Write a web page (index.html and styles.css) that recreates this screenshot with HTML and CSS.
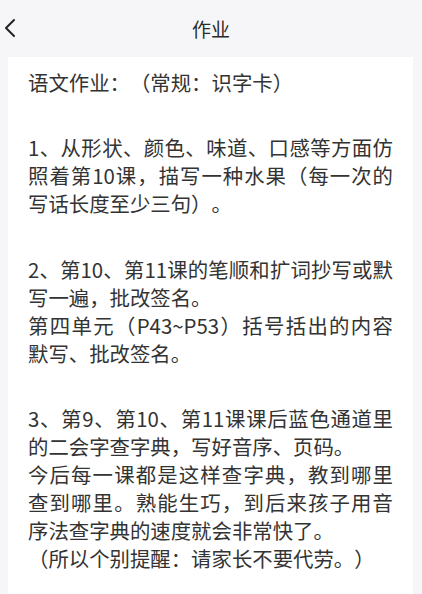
FILE: index.html
```html
<!DOCTYPE html>
<html lang="zh-CN">
<head>
<meta charset="utf-8">
<title>作业</title>
<link rel="stylesheet" href="styles.css">
</head>
<body>
<div class="page">
  <header class="nav">
    <span class="back" aria-label="返回">
      <svg width="14" height="20" viewBox="0 0 14 20"><path d="M11 2 L3 10 L11 18" fill="none" stroke="#222" stroke-width="2" stroke-linecap="round" stroke-linejoin="round"/></svg>
    </span>
    <h1 class="title">作业</h1>
  </header>
  <main class="card">
    <p class="para">语文作业：（常规：识字卡）</p>
    <p class="para">1、从形状、颜色、味道、口感等方面仿照着第10课，描写一种水果（每一次的写话长度至少三句）。</p>
    <p class="para">2、第10、第11课的笔顺和扩词抄写或默写一遍，批改签名。<br>第四单元（P43~P53）括号括出的内容默写、批改签名。</p>
    <p class="para">3、第9、第10、第11课课后蓝色通道里的二会字查字典，写好音序、页码。<br>今后每一课都是这样查字典，教到哪里查到哪里。熟能生巧，到后来孩子用音序法查字典的速度就会非常快了。<br>（所以个别提醒：请家长不要代劳。）</p>
  </main>
</div>
</body>
</html>
```

FILE: styles.css
```css
html, body {
  margin: 0;
  padding: 0;
  background: #f6f6f8;
}
body {
  font-family: "Noto Sans CJK SC", "Noto Sans", sans-serif;
  color: #333;
  text-spacing-trim: space-all;
}
.page {
  width: 422px;
  height: 594px;
  overflow: hidden;
  display: flex;
  flex-direction: column;
}
.nav {
  position: relative;
  height: 57px;
  display: flex;
  align-items: center;
  justify-content: center;
  flex-shrink: 0;
}
.back {
  position: absolute;
  left: 3px;
  top: 18px;
  display: flex;
}
.title {
  margin: 0;
  font-size: 19px;
  font-weight: 400;
  color: #2a2a2a;
  line-height: 1;
  padding-bottom: 1px;
}
.card {
  margin: 0 9px 0 8px;
  background: #fff;
  padding: 11px 20px 20px 20px;
  flex: 1;
}
.para {
  margin: 0;
  font-size: 20.4px;
  line-height: 28px;
  text-align: justify;
  text-spacing-trim: space-all;
}
.para + .para {
  margin-top: 37.3px;
}
```
